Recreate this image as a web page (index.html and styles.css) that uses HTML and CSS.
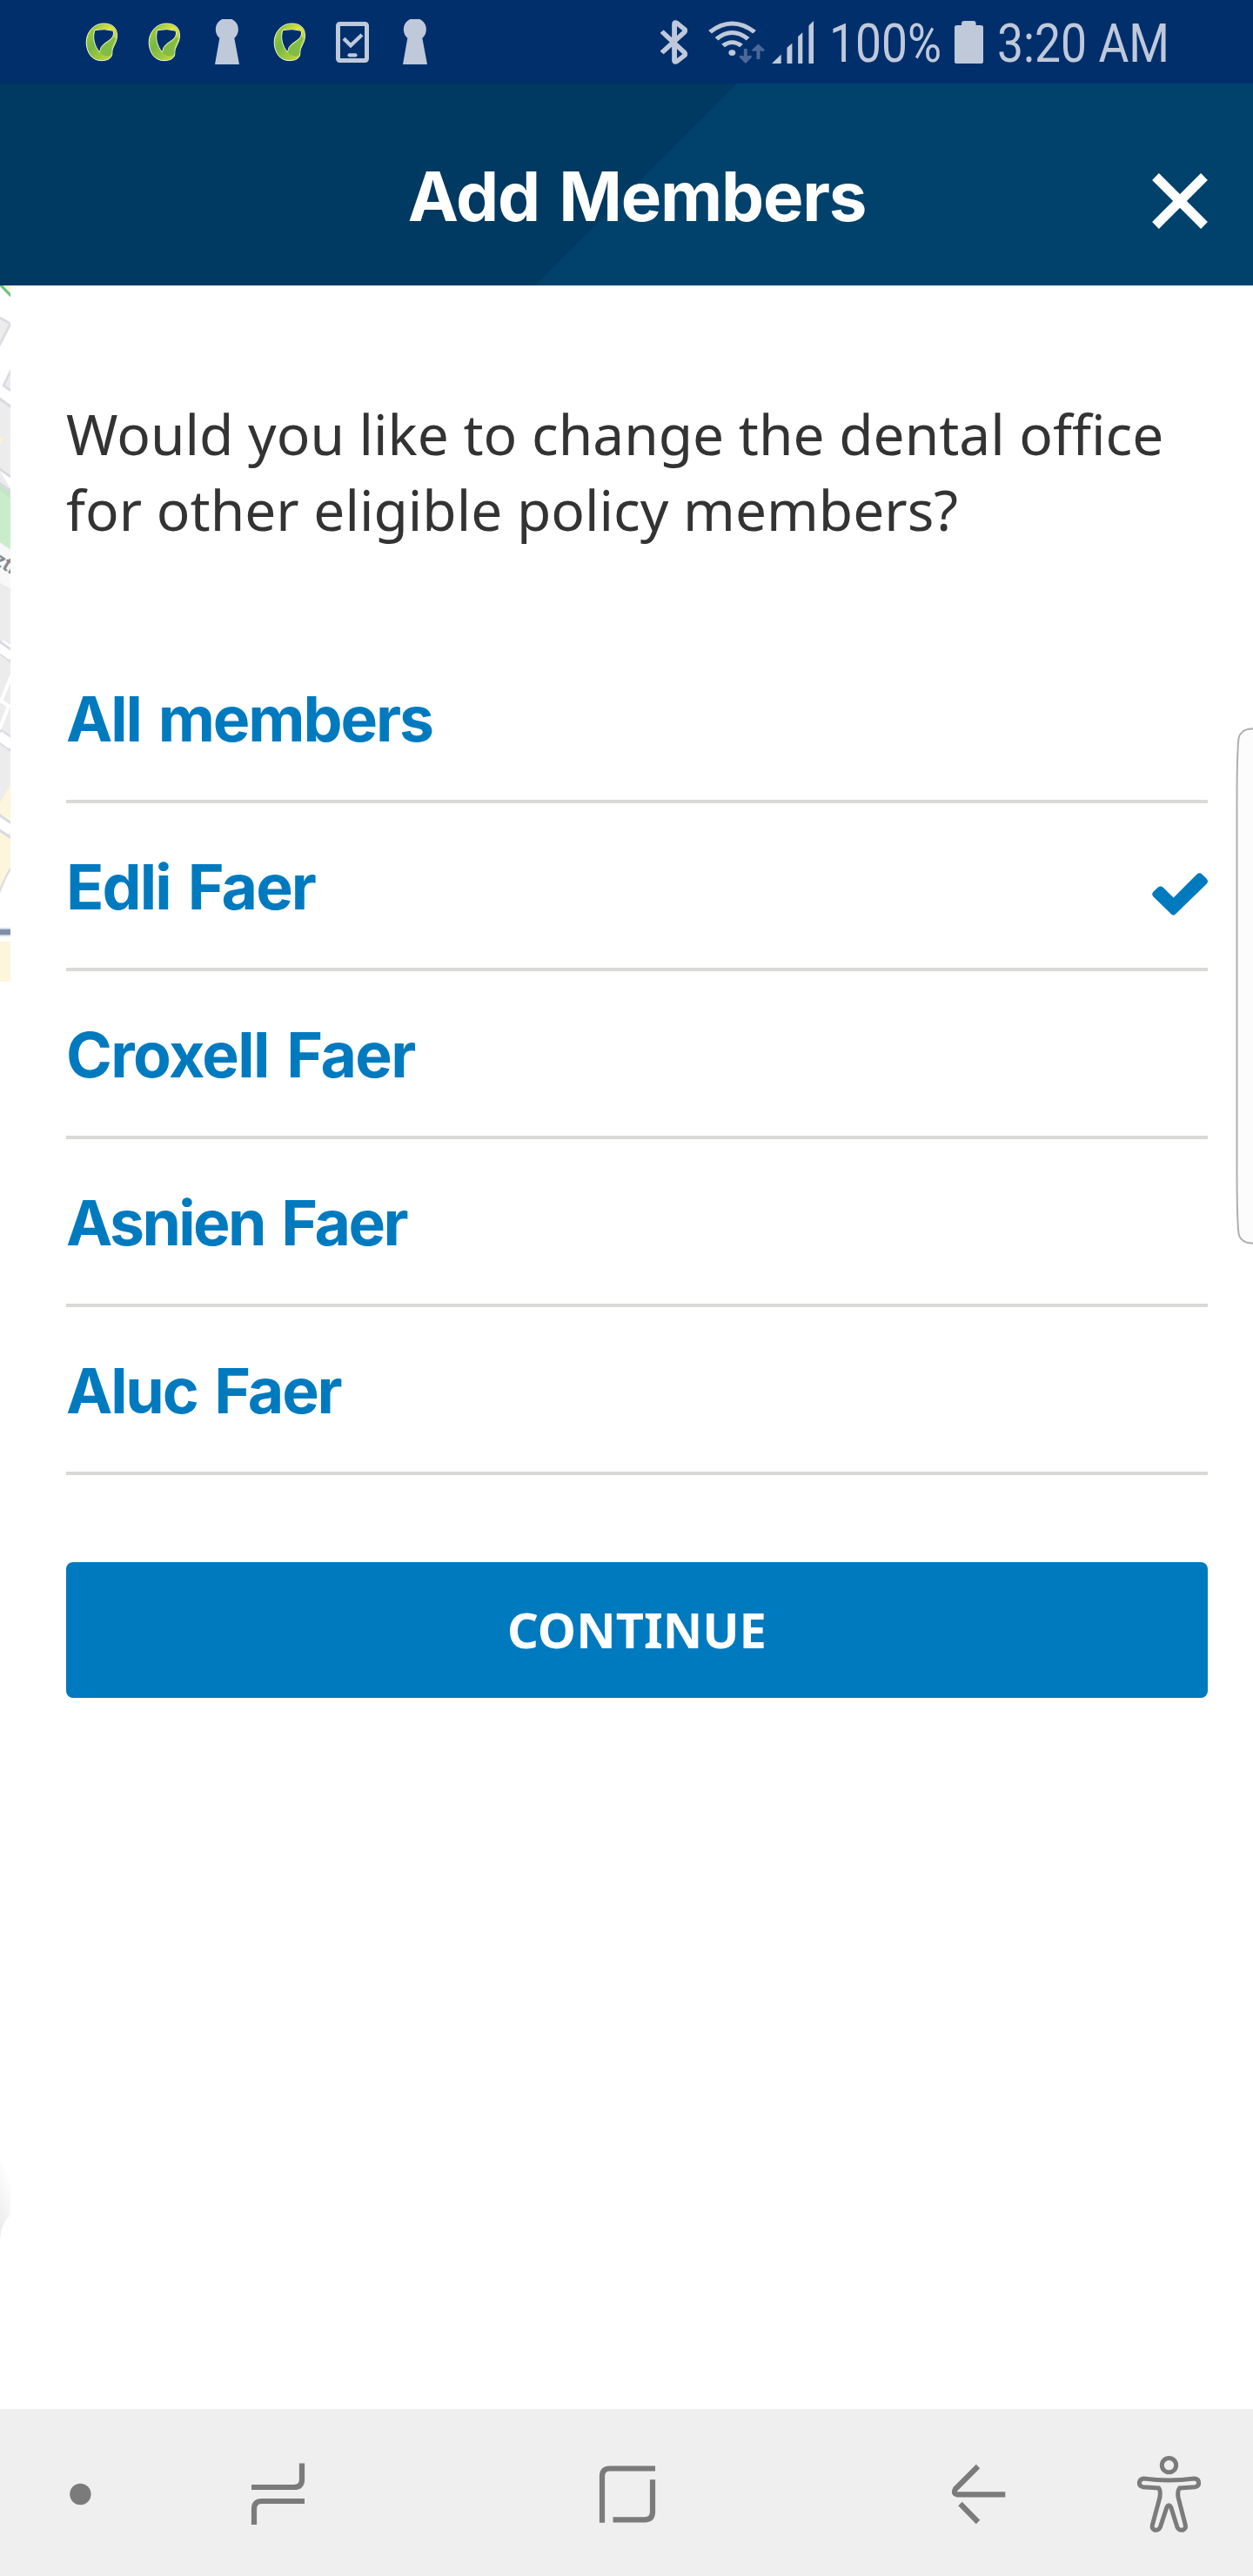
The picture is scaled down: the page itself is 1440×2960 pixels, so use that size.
FILE: index.html
```html
<!DOCTYPE html>
<html lang="en">
<head>
<meta charset="utf-8">
<title>Add Members</title>
<link rel="stylesheet" href="styles.css">
</head>
<body>
<svg class="defs" width="0" height="0" aria-hidden="true">
  <defs>
    <linearGradient id="leafBand" x1="0" y1="0" x2="1" y2="1">
      <stop offset="0" stop-color="#8fc63d"/><stop offset=".5" stop-color="#dfe637"/><stop offset="1" stop-color="#c5da38"/>
    </linearGradient>
    <linearGradient id="leafSide" x1="0" y1="0" x2="1" y2="1">
      <stop offset="0" stop-color="#b5d334"/><stop offset=".4" stop-color="#78b843"/><stop offset="1" stop-color="#d3e03a"/>
    </linearGradient>
    <symbol id="leaf" viewBox="55 78 113 135">
      <path d="M120 81C85 80 58 110 58 146C59 182 78 210 112 209C132 208 145 202 147 186C145 160 164 152 164 122C164 96 148 82 120 81ZM87 104Q121 97 151 106C157 130 136 139 120 151Q106 161 104 180C85 158 79 130 87 104Z" fill="url(#leafSide)" stroke="#f4f7dc" stroke-width="3" fill-rule="evenodd"/>
      <path d="M88 102C102 80 139 78 155 98Q165 112 159 132L153 128Q157 116 150 104Q121 96 88 102Z" fill="url(#leafBand)"/>
      <path d="M158 132C151 149 144 160 146 184Q139 198 122 192Q108 188 106 178C109 152 140 152 153 128Z" fill="#80bd42"/>
    </symbol>
    <symbol id="keyhole" viewBox="501 66 84 156">
      <path d="M517 131A39 39 0 1 1 568 131L585 222H501Z" fill="#bfc9da"/>
    </symbol>
  </defs>
</svg>
<div class="screen">
  <div class="statusbar">
    <div class="notifications">
      <span class="cell"><svg class="leaf"><use href="#leaf"/></svg></span>
      <span class="cell"><svg class="leaf"><use href="#leaf"/></svg></span>
      <span class="cell"><svg class="keyhole"><use href="#keyhole"/></svg></span>
      <span class="cell"><svg class="leaf"><use href="#leaf"/></svg></span>
      <span class="cell"><svg class="device" viewBox="918 73 114 141" fill="none" stroke="#bfc9da"><rect x="925.500" y="80.500" width="99" height="126" rx="6" stroke-width="15"/><path d="M945 131L969 155L1008 118" stroke-width="13"/><path d="M965 188H985" stroke-width="13" stroke-linecap="round"/></svg></span>
      <span class="cell"><svg class="keyhole"><use href="#keyhole"/></svg></span>
    </div>
    <div class="indicators">
      <svg class="bluetooth" viewBox="48 68 79 152" preserveAspectRatio="none" fill="none" stroke="#bfc9da" stroke-width="15"><path d="M52 107L118 179Q122 184 118 190L96 210Q89 215 89 207V81Q89 73 96 78L118 99Q122 104 118 110L52 180"/></svg>
      <svg class="wifi" viewBox="188 70 164 146" preserveAspectRatio="none" fill="none" stroke="#bfc9da" stroke-width="14"><path d="M193 108Q257 50 322 108M212 132Q257 89 303 132M231 155Q257 132 284 155"/><circle cx="257" cy="179" r="10" fill="#bfc9da" stroke="none"/><path d="M291 165H301V191L311 188L315 193L296 216L277 193L281 188L291 191ZM328 201H338V172L348 174L352 170L333 149L314 170L318 174L328 172Z" fill="#4b6996" stroke="none"/></svg>
      <svg class="signal" viewBox="371 71 121 145" preserveAspectRatio="none" fill="#bfc9da"><path d="M371 216L398 185V216ZM415 162L430 147V216H415ZM447 124L460 110V216H447ZM478 87L492 71V216H478Z"/></svg>
      <svg class="percent" viewBox="0 0 123 96"><text x="-4" y="71.300" textLength="129" lengthAdjust="spacingAndGlyphs">100%</text></svg>
      <svg class="battery" viewBox="903 71 82 145" preserveAspectRatio="none" fill="#bfc9da"><path d="M923 86V79Q923 71 931 71H957Q964 71 964 79V86H977Q985 86 985 92V210Q985 216 977 216H911Q903 216 903 210V92Q903 86 911 86Z"/></svg>
      <svg class="clock" viewBox="0 0 193 96"><text x="-1" y="71.300" textLength="198" lengthAdjust="spacingAndGlyphs">3:20 AM</text></svg>
    </div>
  </div>

  <header class="header">
    <h1 class="title">Add Members</h1>
    <svg class="close" viewBox="0 0 64 64"><path d="M4 4L60 60M60 4L4 60" stroke="#fff" stroke-width="11"/></svg>
  </header>

  <main class="content">
    <svg class="map" viewBox="0 0 36 2400">
      <rect width="36" height="2400" fill="#ececec"/>
      <path d="M0 0H36V700L0 640Z" fill="#fff"/>
      <path d="M12 0H36V26Z" fill="#fdf1cf"/>
      <path d="M-4 -8L40 38" stroke="#67c183" stroke-width="9"/>
      <path d="M-5 108L36 132L-5 212Z" fill="#ececec" stroke="#dadbe0" stroke-width="8"/>
      <path d="M42 284L12 345L42 366Z" fill="#ececec" stroke="#dadbe0" stroke-width="8"/>
      <path d="M-4 388L40 420V662L-4 632Z" fill="#ececec"/>
      <path d="M-4 388L40 420M-4 631L40 662M-4 680L40 711" stroke="#d8dae0" stroke-width="9"/>
      <path d="M0 522L12 526L0 546Z" fill="#fdf1cf"/>
      <path d="M0 688L36 714V910L0 885Z" fill="#c9edcb"/>
      <path d="M0 688L36 714V735L0 708Z" fill="#c4e5c6"/>
      <path d="M0 887L36 912V1045L0 1025Z" fill="#f8f8f8"/>
      <text class="street" transform="translate(-26 956) rotate(32)">zti</text>
      <path d="M-4 1243L40 1272" stroke="#fff" stroke-width="50"/>
      <path d="M-4 1226L40 1257M-4 1266L40 1298M-4 1530L40 1560M-4 1572L40 1605" stroke="#d8dae0" stroke-width="9"/>
      <path d="M-4 1551L40 1583" stroke="#fff" stroke-width="34"/>
      <path d="M-4 1248L40 1279" stroke="#fff" stroke-width="28"/>
      <path d="M40 1344L4 1432L30 1450L-2 1530M-4 1430L10 1438" stroke="#fff" stroke-width="12" fill="none"/>
      <path d="M36 1720L0 1784V2090L36 2010Z" fill="#fdf5dc"/>
      <path d="M-4 1843L40 1873" stroke="#fff" stroke-width="45"/>
      <path d="M-4 1824L40 1854M-4 1877L40 1905" stroke="#d8dae0" stroke-width="9"/>
      <path d="M36 2010L0 2090V2400H36Z" fill="#fff"/>
      <path d="M38 2008Q16 2040 -2 2092" stroke="#dddee2" stroke-width="7" fill="none"/>
      <path d="M0 2229H36" stroke="#7f8ea9" stroke-width="20"/>
      <path d="M0 2217H36M0 2241H36" stroke="#cdd3dc" stroke-width="4"/>
      <rect y="2262" width="36" height="138" fill="#fdf5dc"/>
    </svg>
    <svg class="shade" viewBox="0 0 36 270"><defs><linearGradient id="fade" x1=".3" y1="0" x2="0" y2="1"><stop offset="0" stop-color="#fff"/><stop offset="1" stop-color="#e9e9e9"/></linearGradient></defs><path d="M0 0H36V185Q2 220 0 270Z" fill="url(#fade)"/></svg>

    <p class="question">Would you like to change the dental office for other eligible policy members?</p>
    <ul class="members">
      <li class="member"><span class="name n-all">All members</span></li>
      <li class="member"><span class="name n-edli">Edli Faer</span>
        <svg class="check" viewBox="72 447 192 119" preserveAspectRatio="none"><path d="M76 500Q69 507 76 513L137 561Q145 569 154 561L261 477Q267 471 261 464L245 451Q235 444 226 451L146 516L111 488Q101 481 91 488Z" fill="#007abf"/></svg></li>
      <li class="member"><span class="name n-croxell">Croxell Faer</span></li>
      <li class="member"><span class="name n-asnien">Asnien Faer</span></li>
      <li class="member"><span class="name n-aluc">Aluc Faer</span></li>
    </ul>
    <button class="continue">CONTINUE</button>
    <svg class="edge" viewBox="0 0 20 594"><path d="M22 1.500H18C10 1.500 4 7 3.500 13Q1.500 28 1.500 90V504Q1.500 566 3.500 581C4 587 10 592.500 18 592.500H22Z" fill="#fcfcfc" stroke="#aeaeae" stroke-width="2"/></svg>
  </main>

  <nav class="navbar">
    <svg viewBox="0 2768 1440 192" fill="none" stroke="#7b7b7b" stroke-width="6.200">
      <circle cx="92.400" cy="2866" r="12.200" fill="#7b7b7b" stroke="none"/>
      <path d="M289 2858H338Q347 2858 347 2849V2830.500M350 2874H301Q292 2874 292 2883V2901"/>
      <path d="M753 2836.500H701Q692 2836.500 692 2845.500V2898.700M750 2849.300V2886Q750 2895.300 741 2895.300H704.500"/>
      <path d="M1155.300 2866.300H1100Q1095 2865 1098 2860L1124 2834M1103.500 2877L1124 2898"/>
      <g transform="translate(1050 2760) scale(.33333)" stroke-width="15">
        <circle cx="880.500" cy="218" r="24.500"/>
        <path d="M793 264Q880 276 968 264Q983 266 983 279Q983 291 970 293L917 297Q909 305 912 328L937 425Q940 438 927 442Q914 443 909 432L887 362Q880 350 873 362L850 432Q845 443 832 442Q820 438 823 425L849 328Q852 305 845 297L790 293Q778 290 778 279Q779 266 793 264Z"/>
      </g>
    </svg>
  </nav>
</div>
</body>
</html>
```
FILE: styles.css
```css
* { box-sizing: border-box; }
body { margin: 0; background: #fff; }
svg { display: block; flex: none; }
.defs { position: absolute; }
.screen { display: flex; flex-direction: column; width: 1440px; height: 2960px; overflow: hidden; }

.statusbar { display: flex; justify-content: space-between; height: 96px; padding: 0 100px 0 81px; background: #002f6c; }
.notifications { display: flex; align-items: center; }
.cell { display: flex; justify-content: center; width: 72px; }
.leaf { width: 38px; height: 45px; }
.keyhole { width: 28px; height: 52px; }
.device { width: 38px; height: 47px; }
.indicators { display: flex; align-items: center; }
.bluetooth { width: 31px; height: 51px; margin-right: 24px; }
.wifi { width: 65px; height: 49px; margin-right: 8px; }
.signal { width: 48px; height: 49px; margin-right: 22px; }
.percent { width: 123px; height: 96px; margin-right: 17px; overflow: visible; }
.battery { width: 33px; height: 49px; margin-right: 17px; }
.clock { width: 193px; height: 96px; overflow: visible; }
.statusbar text { font: 400 61px Roboto, sans-serif; fill: #bfc9da; }

.header { display: grid; grid-template-columns: 64px 1fr 64px; align-items: center; height: 232px; padding: 27px 52px 0 76px; background: linear-gradient(135deg, #003961 598.500px, #00426b 599.500px); }
.title { grid-column: 2; margin: 0; text-align: center; color: #fff; font: 700 78px/100px Inter, sans-serif; letter-spacing: -1.200px; word-spacing: 5px; white-space: nowrap; }
.close { width: 64px; height: 64px; margin-top: 11px; }

.content { position: relative; flex: 1; padding: 127px 52px 0 76px; }
.map { position: absolute; left: 0; top: 0; width: 12px; height: 800px; }
.street { font: 700 70px "Liberation Sans", sans-serif; fill: #868b91; }
.shade { position: absolute; left: 0; top: 2155px; width: 12px; height: 90px; }
.edge { position: absolute; right: 0; top: 508px; width: 20px; height: 594px; }
.question { margin: 0 0 101px; color: #333; font: 400 64px/87px "Noto Sans", sans-serif; }
.members { margin: 0; padding: 0; list-style: none; }
.member { display: flex; align-items: center; justify-content: space-between; height: 193px; padding-top: 3px; border-bottom: 4px solid #d9d9d5; }
.name { color: #007abf; font: 700 71.500px/90px Inter, sans-serif; word-spacing: 5px; white-space: nowrap; }
.n-all { letter-spacing: -2.100px; }
.n-edli { letter-spacing: -1.900px; }
.n-croxell { letter-spacing: -1.600px; }
.n-asnien { letter-spacing: -2.600px; }
.n-aluc { letter-spacing: -2.200px; }
.check { width: 64px; height: 49px; margin-top: 16px; }
.continue { display: block; width: 100%; height: 156px; margin-top: 100px; padding: 0 0 2px; border: 0; border-radius: 8px; background: #007abf; color: #fff; font: 700 56px/76px "Noto Sans", sans-serif; }

.navbar { height: 192px; background: #efefef; }
.navbar svg { width: 1440px; height: 192px; }
```
